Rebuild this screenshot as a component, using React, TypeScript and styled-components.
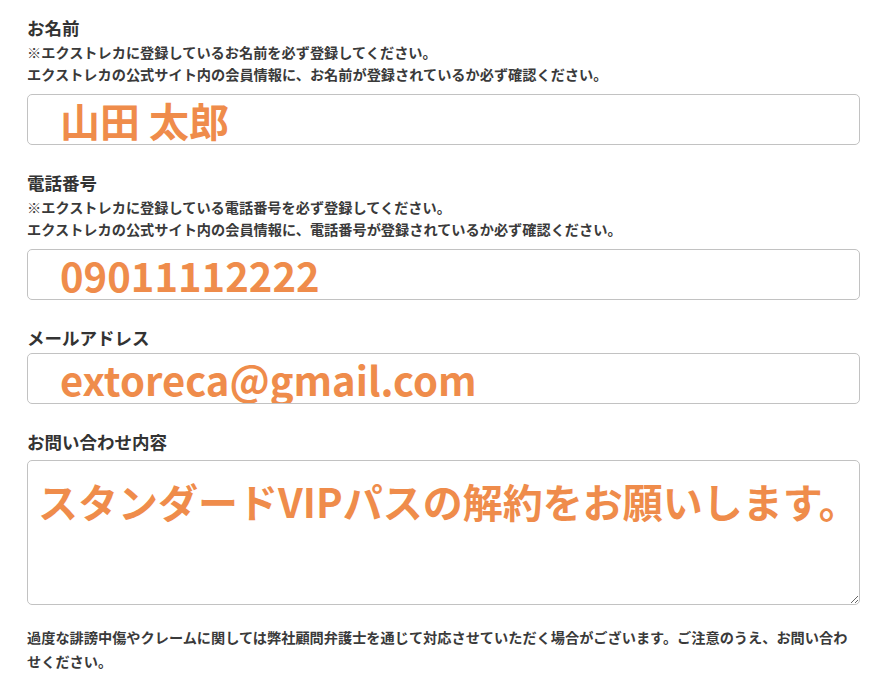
import React from 'react';
import styled, { createGlobalStyle } from 'styled-components';

const GlobalStyle = createGlobalStyle`
  body {
    margin: 0;
    background: #ffffff;
    font-family: 'Noto Sans CJK JP', 'Noto Sans', sans-serif;
    color: #333333;
  }
`;

type Field = {
  label: string;
  notes?: string[];
  value: string;
};

const fields: Field[] = [
  {
    label: 'お名前',
    notes: [
      '※エクストレカに登録しているお名前を必ず登録してください。',
      'エクストレカの公式サイト内の会員情報に、お名前が登録されているか必ず確認ください。',
    ],
    value: '山田 太郎',
  },
  {
    label: '電話番号',
    notes: [
      '※エクストレカに登録している電話番号を必ず登録してください。',
      'エクストレカの公式サイト内の会員情報に、電話番号が登録されているか必ず確認ください。',
    ],
    value: '09011112222',
  },
  {
    label: 'メールアドレス',
    value: 'extoreca@gmail.com',
  },
];

const App = () => {
  return (
    <>
      <GlobalStyle />
      <Page>
        <Form>
          {fields.map((f) => (
            <FieldBox key={f.label}>
              <Label>{f.label}</Label>
              {f.notes && (
                <Notes>
                  {f.notes.map((n) => (
                    <Note key={n}>{n}</Note>
                  ))}
                </Notes>
              )}
              <Input type="text" value={f.value} readOnly />
            </FieldBox>
          ))}
          <FieldBox>
            <Label>お問い合わせ内容</Label>
            <TextArea value="スタンダードVIPパスの解約をお願いします。" wrap="off" readOnly />
          </FieldBox>
        </Form>
        <Caution>
          過度な誹謗中傷やクレームに関しては弊社顧問弁護士を通じて対応させていただく場合がございます。ご注意のうえ、お問い合わせください。
        </Caution>
      </Page>
    </>
  );
};

export default App;

const Page = styled.div`
  width: 833px;
  padding: 16px 0 0 27px;
`;

const Form = styled.div`
  display: flex;
  flex-direction: column;
  gap: 26px;
`;

const FieldBox = styled.div`
  display: flex;
  flex-direction: column;
`;

const Label = styled.div`
  font-size: 17.5px;
  font-weight: 700;
  line-height: 24px;
  color: #333333;
`;

const Notes = styled.div`
  display: flex;
  flex-direction: column;
  margin: 1px 0 6px;
`;

const Note = styled.div`
  font-size: 14.2px;
  font-weight: 700;
  line-height: 22px;
  color: #3a3a3a;
  white-space: nowrap;
`;

// 入力欄（値はオレンジの太字）
const Input = styled.input`
  box-sizing: border-box;
  width: 100%;
  height: 51px;
  margin-top: 3px;
  padding: 0 0 0 32px;
  border: 1px solid #c2c2c2;
  border-radius: 5px;
  outline: none;
  background: #ffffff;
  font-family: 'Noto Sans CJK JP', 'Noto Sans', sans-serif;
  font-size: 40px;
  font-weight: 700;
  color: #ef8c4b;
`;

const TextArea = styled.textarea`
  box-sizing: border-box;
  width: 100%;
  height: 145px;
  margin-top: 6px;
  padding: 12px 4px 12px 10px;
  border: 1px solid #c2c2c2;
  border-radius: 5px;
  outline: none;
  background: #ffffff;
  font-family: 'Noto Sans CJK JP', 'Noto Sans', sans-serif;
  font-size: 40px;
  font-weight: 700;
  line-height: 56px;
  color: #ef8c4b;
  white-space: pre;
  overflow: hidden;
  resize: vertical;
`;

const Caution = styled.p`
  margin: 20px 0 0;
  font-size: 14.2px;
  font-weight: 700;
  line-height: 24px;
  color: #3a3a3a;
`;
